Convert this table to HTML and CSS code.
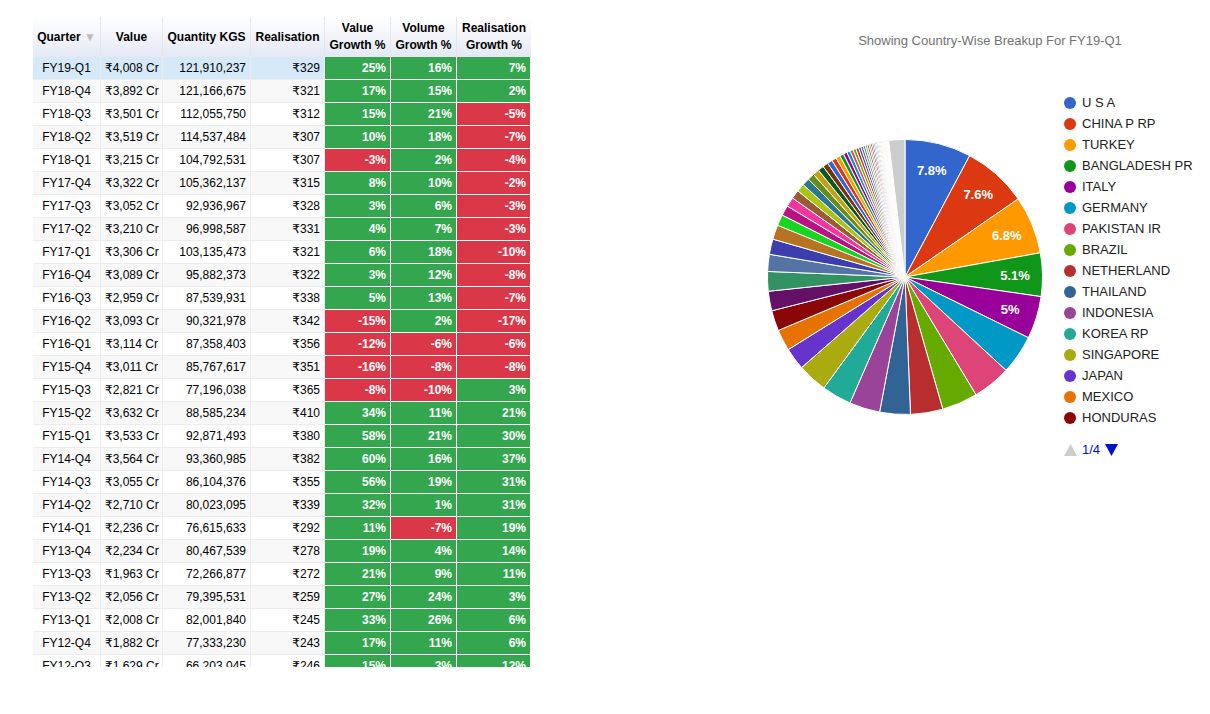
FILE: index.html
```html
<!DOCTYPE html>
<html lang="en">
<head>
<meta charset="utf-8">
<title>Quarterly Export Summary</title>
<link rel="stylesheet" href="styles.css">
</head>
<body>
<div class="page">
  <div class="table-wrap">
    <table class="grid">
      <colgroup>
        <col class="w68"><col class="w62"><col class="w88"><col class="w74"><col class="w66"><col class="w66"><col class="w74">
      </colgroup>
      <thead>
        <tr>
          <th>Quarter <span class="sort">&#9660;</span></th>
          <th>Value</th>
          <th>Quantity KGS</th>
          <th>Realisation</th>
          <th>Value Growth %</th>
          <th>Volume Growth %</th>
          <th>Realisation Growth %</th>
        </tr>
      </thead>
      <tbody>
        <tr class="sel"><td class="c">FY19-Q1</td><td>₹4,008 Cr</td><td>121,910,237</td><td>₹329</td><td class="up">25%</td><td class="up">16%</td><td class="up">7%</td></tr>
        <tr><td class="c">FY18-Q4</td><td>₹3,892 Cr</td><td>121,166,675</td><td>₹321</td><td class="up">17%</td><td class="up">15%</td><td class="up">2%</td></tr>
        <tr><td class="c">FY18-Q3</td><td>₹3,501 Cr</td><td>112,055,750</td><td>₹312</td><td class="up">15%</td><td class="up">21%</td><td class="dn">-5%</td></tr>
        <tr><td class="c">FY18-Q2</td><td>₹3,519 Cr</td><td>114,537,484</td><td>₹307</td><td class="up">10%</td><td class="up">18%</td><td class="dn">-7%</td></tr>
        <tr><td class="c">FY18-Q1</td><td>₹3,215 Cr</td><td>104,792,531</td><td>₹307</td><td class="dn">-3%</td><td class="up">2%</td><td class="dn">-4%</td></tr>
        <tr><td class="c">FY17-Q4</td><td>₹3,322 Cr</td><td>105,362,137</td><td>₹315</td><td class="up">8%</td><td class="up">10%</td><td class="dn">-2%</td></tr>
        <tr><td class="c">FY17-Q3</td><td>₹3,052 Cr</td><td>92,936,967</td><td>₹328</td><td class="up">3%</td><td class="up">6%</td><td class="dn">-3%</td></tr>
        <tr><td class="c">FY17-Q2</td><td>₹3,210 Cr</td><td>96,998,587</td><td>₹331</td><td class="up">4%</td><td class="up">7%</td><td class="dn">-3%</td></tr>
        <tr><td class="c">FY17-Q1</td><td>₹3,306 Cr</td><td>103,135,473</td><td>₹321</td><td class="up">6%</td><td class="up">18%</td><td class="dn">-10%</td></tr>
        <tr><td class="c">FY16-Q4</td><td>₹3,089 Cr</td><td>95,882,373</td><td>₹322</td><td class="up">3%</td><td class="up">12%</td><td class="dn">-8%</td></tr>
        <tr><td class="c">FY16-Q3</td><td>₹2,959 Cr</td><td>87,539,931</td><td>₹338</td><td class="up">5%</td><td class="up">13%</td><td class="dn">-7%</td></tr>
        <tr><td class="c">FY16-Q2</td><td>₹3,093 Cr</td><td>90,321,978</td><td>₹342</td><td class="dn">-15%</td><td class="up">2%</td><td class="dn">-17%</td></tr>
        <tr><td class="c">FY16-Q1</td><td>₹3,114 Cr</td><td>87,358,403</td><td>₹356</td><td class="dn">-12%</td><td class="dn">-6%</td><td class="dn">-6%</td></tr>
        <tr><td class="c">FY15-Q4</td><td>₹3,011 Cr</td><td>85,767,617</td><td>₹351</td><td class="dn">-16%</td><td class="dn">-8%</td><td class="dn">-8%</td></tr>
        <tr><td class="c">FY15-Q3</td><td>₹2,821 Cr</td><td>77,196,038</td><td>₹365</td><td class="dn">-8%</td><td class="dn">-10%</td><td class="up">3%</td></tr>
        <tr><td class="c">FY15-Q2</td><td>₹3,632 Cr</td><td>88,585,234</td><td>₹410</td><td class="up">34%</td><td class="up">11%</td><td class="up">21%</td></tr>
        <tr><td class="c">FY15-Q1</td><td>₹3,533 Cr</td><td>92,871,493</td><td>₹380</td><td class="up">58%</td><td class="up">21%</td><td class="up">30%</td></tr>
        <tr><td class="c">FY14-Q4</td><td>₹3,564 Cr</td><td>93,360,985</td><td>₹382</td><td class="up">60%</td><td class="up">16%</td><td class="up">37%</td></tr>
        <tr><td class="c">FY14-Q3</td><td>₹3,055 Cr</td><td>86,104,376</td><td>₹355</td><td class="up">56%</td><td class="up">19%</td><td class="up">31%</td></tr>
        <tr><td class="c">FY14-Q2</td><td>₹2,710 Cr</td><td>80,023,095</td><td>₹339</td><td class="up">32%</td><td class="up">1%</td><td class="up">31%</td></tr>
        <tr><td class="c">FY14-Q1</td><td>₹2,236 Cr</td><td>76,615,633</td><td>₹292</td><td class="up">11%</td><td class="dn">-7%</td><td class="up">19%</td></tr>
        <tr><td class="c">FY13-Q4</td><td>₹2,234 Cr</td><td>80,467,539</td><td>₹278</td><td class="up">19%</td><td class="up">4%</td><td class="up">14%</td></tr>
        <tr><td class="c">FY13-Q3</td><td>₹1,963 Cr</td><td>72,266,877</td><td>₹272</td><td class="up">21%</td><td class="up">9%</td><td class="up">11%</td></tr>
        <tr><td class="c">FY13-Q2</td><td>₹2,056 Cr</td><td>79,395,531</td><td>₹259</td><td class="up">27%</td><td class="up">24%</td><td class="up">3%</td></tr>
        <tr><td class="c">FY13-Q1</td><td>₹2,008 Cr</td><td>82,001,840</td><td>₹245</td><td class="up">33%</td><td class="up">26%</td><td class="up">6%</td></tr>
        <tr><td class="c">FY12-Q4</td><td>₹1,882 Cr</td><td>77,333,230</td><td>₹243</td><td class="up">17%</td><td class="up">11%</td><td class="up">6%</td></tr>
        <tr><td class="c">FY12-Q3</td><td>₹1,629 Cr</td><td>66,203,045</td><td>₹246</td><td class="up">15%</td><td class="up">3%</td><td class="up">12%</td></tr>
        <tr><td class="c">FY12-Q2</td><td>₹1,598 Cr</td><td>64,211,872</td><td>₹249</td><td class="up">18%</td><td class="up">5%</td><td class="up">12%</td></tr>
      </tbody>
    </table>
  </div>

  <div class="chart">
    <div class="chart-title">Showing Country-Wise Breakup For FY19-Q1</div>
    <div class="chart-body">
      <svg class="pie" id="pie" width="280" height="280" viewBox="0 0 280 280"></svg>
      <div class="legend">
        <ul class="legend-list">
          <li><span class="dot" style="background:#3366cc"></span>U S A</li>
          <li><span class="dot" style="background:#dc3912"></span>CHINA P RP</li>
          <li><span class="dot" style="background:#ff9900"></span>TURKEY</li>
          <li><span class="dot" style="background:#109618"></span>BANGLADESH PR</li>
          <li><span class="dot" style="background:#990099"></span>ITALY</li>
          <li><span class="dot" style="background:#0099c6"></span>GERMANY</li>
          <li><span class="dot" style="background:#dd4477"></span>PAKISTAN IR</li>
          <li><span class="dot" style="background:#66aa00"></span>BRAZIL</li>
          <li><span class="dot" style="background:#b82e2e"></span>NETHERLAND</li>
          <li><span class="dot" style="background:#316395"></span>THAILAND</li>
          <li><span class="dot" style="background:#994499"></span>INDONESIA</li>
          <li><span class="dot" style="background:#22aa99"></span>KOREA RP</li>
          <li><span class="dot" style="background:#aaaa11"></span>SINGAPORE</li>
          <li><span class="dot" style="background:#6633cc"></span>JAPAN</li>
          <li><span class="dot" style="background:#e67300"></span>MEXICO</li>
          <li><span class="dot" style="background:#8b0707"></span>HONDURAS</li>
        </ul>
        <div class="pager">
          <svg class="tri" width="13" height="12" viewBox="0 0 13 12"><polygon points="0,12 6.5,0 13,12" fill="#cccccc"/></svg>
          <span class="page-num">1/4</span>
          <svg class="tri" width="13" height="12" viewBox="0 0 13 12"><polygon points="0,0 13,0 6.5,12" fill="#0011cc"/></svg>
        </div>
      </div>
    </div>
  </div>
</div>
<script src="script.js"></script>
</body>
</html>
```

FILE: styles.css
```css
* { box-sizing: border-box; }

html, body {
  margin: 0;
  padding: 0;
  background: #ffffff;
}

body {
  font-family: "Liberation Sans", Arial, "DejaVu Sans", sans-serif;
  color: #000;
}

.page {
  display: flex;
  align-items: flex-start;
  padding: 17px 0 0 33px;
  width: 1210px;
  height: 714px;
  overflow: hidden;
}

/* ---------- table ---------- */
.table-wrap {
  flex: none;
  width: 498px;
  height: 650px;
  overflow: hidden;
}

.grid {
  width: 498px;
  table-layout: fixed;
  border-collapse: separate;
  border-spacing: 0;
  font-size: 12px;
}

.w68 { width: 68px; }
.w62 { width: 62px; }
.w88 { width: 88px; }
.w74 { width: 74px; }
.w66 { width: 66px; }

.grid th {
  font-weight: bold;
  padding: 3px 2px;
  line-height: 17px;
  text-align: center;
  vertical-align: middle;
  background: linear-gradient(to bottom, #ffffff 0%, #f3f5fa 45%, #e3e8f3 100%);
  border-right: 1px solid #e4e6ec;
  color: #000;
  white-space: normal;
}

.grid th:last-child { border-right: none; }

.sort {
  color: #bdbdbd;
  font-size: 12px;
  font-weight: normal;
}

.grid td {
  padding: 0 4px;
  line-height: 22px;
  text-align: right;
  white-space: nowrap;
  overflow: hidden;
  border-right: 1px solid #ececec;
  border-bottom: 1px solid #ececec;
  background: #ffffff;
  color: #000;
}

.grid td.c { text-align: center; }

.grid tbody tr:nth-child(even) td { background: #f8f8f8; }

.grid tbody tr.sel td { background: #d6e9f8; }

.grid tbody tr td.up,
.grid tbody tr td.dn {
  color: #ffffff;
  font-weight: bold;
  border-right-color: #ffffff;
  border-bottom-color: #ffffff;
}

.grid tbody tr td.up { background: #34a74e; }
.grid tbody tr td.dn { background: #da3848; }

/* ---------- chart ---------- */
.chart {
  flex: none;
  width: 445px;
  margin-left: 234px;
}

.chart-title {
  margin-top: 16px;
  padding-left: 5px;
  font-size: 13px;
  line-height: 15px;
  text-align: center;
  color: #727272;
}

.chart-body {
  display: flex;
  align-items: flex-start;
  margin-top: 44px;
}

.pie {
  flex: none;
  display: block;
  margin-top: 45px;
}

.legend {
  margin-left: 19px;
}

.legend-list {
  list-style: none;
  margin: 0;
  padding: 0;
}

.legend-list li {
  display: flex;
  align-items: center;
  height: 21px;
  font-size: 13px;
  color: #222222;
  white-space: nowrap;
}

.dot {
  flex: none;
  width: 12px;
  height: 12px;
  border-radius: 50%;
  margin-right: 6px;
}

.pager {
  display: flex;
  align-items: center;
  height: 21px;
  margin-top: 11px;
  gap: 5px;
}

.tri { display: block; }

.page-num {
  font-size: 13px;
  color: #0011cc;
}

.pie-label {
  font-family: "Liberation Sans", Arial, sans-serif;
  font-size: 13px;
  font-weight: bold;
  fill: #ffffff;
}
```

FILE: script.js
```js
(function () {
  var palette = ["#3366cc","#dc3912","#ff9900","#109618","#990099","#0099c6","#dd4477","#66aa00","#b82e2e","#316395","#994499","#22aa99","#aaaa11","#6633cc","#e67300","#8b0707","#651067","#329262","#5574a6","#3b3eac","#b77322","#16d620","#b91383","#f4359e","#9c5935","#a9c413","#2a778d","#668d1c","#bea413","#0c5922","#743411"];
  var values = [7.8,7.6,6.8,5.1,5.0,4.6,4.5,4.2,3.8,3.6,3.6,3.5,3.5,2.6,2.5,2.4,2.3,2.3,2.0,1.8,1.7,1.3];
  for (var k = 0; k < 50; k++) values.push(1.2 * Math.pow(0.925, k));
  var other = 1.9;
  var total = other;
  values.forEach(function (v) { total += v; });

  var svg = document.getElementById("pie");
  var ns = "http://www.w3.org/2000/svg";
  var cx = 140, cy = 140, r = 137.5;
  var a0 = 0;
  var mids = [];

  function pt(a, rr) { return [cx + rr * Math.sin(a), cy - rr * Math.cos(a)]; }

  function slice(v, color) {
    var a1 = a0 + v / total * 2 * Math.PI;
    var p0 = pt(a0, r), p1 = pt(a1, r);
    var large = (a1 - a0) > Math.PI ? 1 : 0;
    var path = document.createElementNS(ns, "path");
    path.setAttribute("d", "M" + cx + " " + cy + "L" + p0[0].toFixed(2) + " " + p0[1].toFixed(2) +
      "A" + r + " " + r + " 0 " + large + " 1 " + p1[0].toFixed(2) + " " + p1[1].toFixed(2) + "Z");
    path.setAttribute("fill", color);
    path.setAttribute("stroke", "#ffffff");
    path.setAttribute("stroke-width", "1");
    svg.appendChild(path);
    mids.push((a0 + a1) / 2);
    a0 = a1;
  }

  values.forEach(function (v, i) { slice(v, palette[i % palette.length]); });
  slice(other, "#cccccc");

  var labels = ["7.8%", "7.6%", "6.8%", "5.1%", "5%"];
  labels.forEach(function (t, i) {
    var p = pt(mids[i], 110);
    var tx = document.createElementNS(ns, "text");
    tx.setAttribute("x", p[0].toFixed(1));
    tx.setAttribute("y", (p[1] + 4.5).toFixed(1));
    tx.setAttribute("text-anchor", "middle");
    tx.setAttribute("class", "pie-label");
    tx.textContent = t;
    svg.appendChild(tx);
  });
})();
```
